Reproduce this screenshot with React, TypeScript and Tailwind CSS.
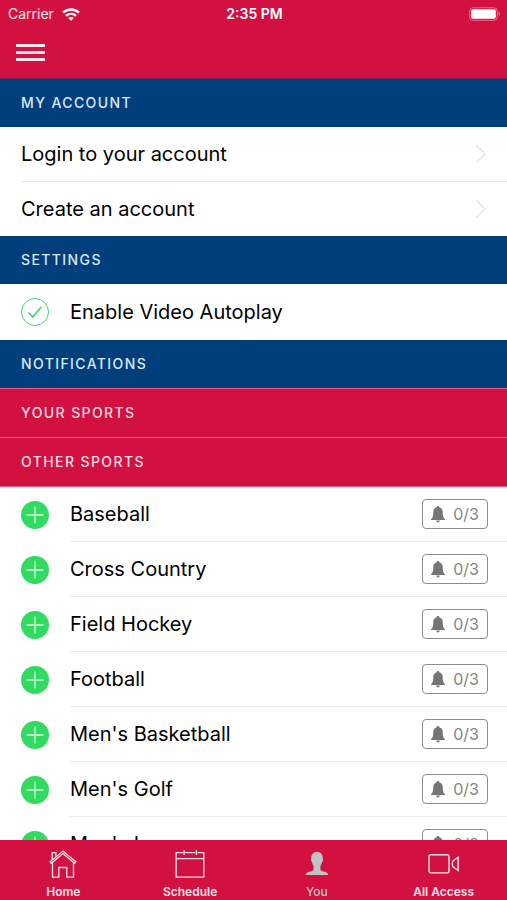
import { useState } from "react"

const SPORTS = [
  "Baseball",
  "Cross Country",
  "Field Hockey",
  "Football",
  "Men's Basketball",
  "Men's Golf",
  "Men's Lacrosse",
]

const ACCOUNT_LINKS = ["Login to your account", "Create an account"]

function SectionHeader({ title, tone = "blue" }: { title: string; tone?: "blue" | "red" }) {
  return (
    <h2
      className={
        tone === "blue"
          ? "flex h-12 items-center bg-[#003e7c] px-[21px] text-sm font-medium tracking-widest text-[#dbe9f7]"
          : "flex h-12 items-center bg-[#d21141] px-[21px] text-sm font-medium tracking-widest text-[#fbdce4]"
      }
    >
      {title}
    </h2>
  )
}

function WifiIcon() {
  return (
    <svg width="18" height="13" viewBox="0 0 18 13" fill="none" stroke="#fff" strokeWidth="2.4" aria-hidden="true">
      <path d="M1 4.700C5.500.4 12.500.4 17 4.700" />
      <path d="M4 7.900c2.900-2.700 7.100-2.700 10 0" />
      <path d="M6.200 10c1.600-1.500 4-1.500 5.600 0L9 12.800z" fill="#fff" stroke="none" />
    </svg>
  )
}

function BatteryIcon() {
  return (
    <svg width="32" height="14" viewBox="0 0 32 14" aria-hidden="true">
      <rect x=".75" y=".75" width="27.5" height="12.5" rx="3.200" fill="none" stroke="#ea6f8c" />
      <rect x="2.200" y="2.200" width="24.600" height="9.600" rx="1.800" fill="#fff" />
      <path d="M29.600 4.800c1.600.6 1.600 3.800 0 4.400z" fill="#ea6f8c" />
    </svg>
  )
}

function BellIcon() {
  return (
    <svg width="14" height="17" viewBox="0 0 14 17" fill="#757575" aria-hidden="true">
      <path d="M7 0c.8 0 1.300.5 1.300 1.300C10.500 1.900 11.700 3.700 11.700 6c0 4 .6 5.900 2.300 7.300v.8H0v-.8C1.700 11.900 2.300 10 2.300 6c0-2.300 1.200-4.100 3.400-4.700C5.700.5 6.200 0 7 0z" />
      <path d="M5.200 14.500h3.600c-.2 1.300-.9 2-1.800 2s-1.600-.7-1.800-2z" />
    </svg>
  )
}

function HomeIcon() {
  return (
    <svg width="28" height="28" viewBox="0 0 28 28" fill="none" stroke="currentColor" strokeWidth="1.300" aria-hidden="true">
      <path d="M1.200 11.800 14 1l12.800 10.800-1.200 1.500L14 3.500 2.400 13.300z" />
      <path d="M3.200 9.900V2.700h3.600v4" />
      <path d="M3.500 12.700v14.500h6.300V17.500h7.900v9.700h6.800V12.700" />
    </svg>
  )
}

function ScheduleIcon() {
  return (
    <svg width="30" height="28" viewBox="0 0 30 28" fill="none" stroke="currentColor" strokeWidth="1.300" aria-hidden="true">
      <path d="M8 2.600H1.200v24.600h27.600V2.600h-6.200M10.200 2.600h9.900" />
      <path d="M1.200 8.700h27.600M9.100 0v5M21.400 0v5" />
    </svg>
  )
}

function PersonIcon() {
  return (
    <svg width="24" height="28" viewBox="0 0 24 28" fill="currentColor" aria-hidden="true">
      <path d="M12 2c3.800 0 5.700 2.300 5.700 5.800 0 .9.500 1.300.3 2.400-.2 1.100-.9 1.500-1.100 2.300-.3 1.500-.8 2.600-1.500 3.500v3.200c0 1.200 1.400 1.700 3.300 2.400 2.400.8 4.200 1.300 4.600 3.400H.7c.4-2.100 2.200-2.600 4.600-3.400 1.900-.7 3.300-1.200 3.300-2.400V16c-.7-.9-1.200-2-1.500-3.500-.2-.8-.9-1.200-1.100-2.300-.2-1.100.3-1.500.3-2.400C6.300 4.300 8.200 2 12 2z" />
    </svg>
  )
}

function VideoIcon() {
  return (
    <svg width="32" height="28" viewBox="0 0 32 28" fill="none" stroke="currentColor" strokeWidth="1.400" aria-hidden="true">
      <rect x="1" y="4.700" width="20" height="18.200" rx="1.800" />
      <path d="M30.200 7.300v13.200l-5-3.600c-1.200-1-1.200-5 0-6z" />
    </svg>
  )
}

const TABS = [
  { label: "Home", Icon: HomeIcon },
  { label: "Schedule", Icon: ScheduleIcon },
  { label: "You", Icon: PersonIcon },
  { label: "All Access", Icon: VideoIcon },
]

export default function App() {
  const [autoplay, setAutoplay] = useState(true)

  return (
    <div className="flex h-screen flex-col bg-white font-['Inter',sans-serif] text-black">
      <header className="shrink-0 border-b border-[#7b2456] bg-[#d21141] text-white">
        {/* Status bar */}
        <div className="grid h-7 grid-cols-3 items-center pr-1.5 pl-2 text-sm">
          <div className="flex items-center gap-2 text-[#ffe3ea]">
            Carrier
            <WifiIcon />
          </div>
          <div className="text-center font-semibold">2:35 PM</div>
          <div className="flex justify-end">
            <BatteryIcon />
          </div>
        </div>
        <button type="button" aria-label="Menu" className="flex h-[50px] flex-col items-start gap-1 px-4 pt-4">
          <span className="h-[3px] w-[29px] bg-[#ffe3ea]" />
          <span className="h-[3px] w-[29px] bg-[#ffe3ea]" />
          <span className="h-[3px] w-[29px] bg-[#ffe3ea]" />
        </button>
      </header>

      <main className="min-h-0 flex-1 overflow-y-auto [scrollbar-width:none]">
        <SectionHeader title="MY ACCOUNT" />
        <ul className="divide-y divide-[#e8e8ea] pl-[21px]">
          {ACCOUNT_LINKS.map((label) => (
            <li key={label}>
              <a href="#" className="flex h-[54px] items-center justify-between pr-5 text-xl">
                {label}
                <svg width="12" height="20" viewBox="0 0 12 20" fill="none" stroke="#e6e6f4" strokeWidth="1.700" aria-hidden="true">
                  <path d="m1.500 1.500 8.500 8.500-8.500 8.500" />
                </svg>
              </a>
            </li>
          ))}
        </ul>

        <SectionHeader title="SETTINGS" />
        <label className="flex h-14 items-center gap-5 px-5 text-xl">
          <span className="relative flex size-[30px] items-center justify-center">
            <input
              type="checkbox"
              checked={autoplay}
              onChange={(e) => setAutoplay(e.target.checked)}
              className="peer size-7 appearance-none rounded-full border border-[#41d76b]"
            />
            <svg
              width="16"
              height="14"
              viewBox="0 0 16 14"
              fill="none"
              stroke="#41d76b"
              strokeWidth="1.700"
              className="pointer-events-none absolute hidden peer-checked:block"
              aria-hidden="true"
            >
              <path d="m1.500 7.500 4.300 4.500L14.200 2" />
            </svg>
          </span>
          Enable Video Autoplay
        </label>

        <div className="grid gap-px border-b border-[#df6080] bg-[#df6080]">
          <SectionHeader title="NOTIFICATIONS" />
          <SectionHeader title="YOUR SPORTS" tone="red" />
          <SectionHeader title="OTHER SPORTS" tone="red" />
        </div>
        <ul>
          {SPORTS.map((sport) => (
            <li key={sport} className="flex gap-5 pl-5">
              <button type="button" aria-label={`Add ${sport}`} className="flex h-[55px] w-[30px] items-center">
                <svg width="30" height="30" viewBox="0 0 30 30" aria-hidden="true">
                  <circle cx="15" cy="15" r="14" fill="#30db5f" />
                  <path d="M15 6.500v17M6.500 15h17" stroke="#dcfbe4" strokeWidth="1.300" />
                </svg>
              </button>
              <div className="flex h-[55px] flex-1 items-center justify-between border-b border-[#ebebed] pr-[19px] text-xl">
                {sport}
                <button
                  type="button"
                  aria-label={`${sport} notifications, 0 of 3`}
                  className="flex h-[30px] w-[66px] items-center justify-center gap-2 rounded border border-[#8c8c8c] text-base text-[#858585]"
                >
                  <BellIcon />
                  0/3
                </button>
              </div>
            </li>
          ))}
        </ul>
      </main>

      <nav className="grid h-15 shrink-0 grid-cols-4 bg-[#d21141]">
        {TABS.map(({ label, Icon }) => (
          <a
            key={label}
            href="#"
            aria-current={label === "You" ? "page" : undefined}
            className={
              label === "You"
                ? "flex flex-col items-center gap-1.5 pt-2.5 text-xs font-medium text-[#c3c3c3]"
                : "flex flex-col items-center gap-1.5 pt-2.5 text-xs font-semibold text-[#ffe3ea]"
            }
          >
            <Icon />
            {label}
          </a>
        ))}
      </nav>
    </div>
  )
}
